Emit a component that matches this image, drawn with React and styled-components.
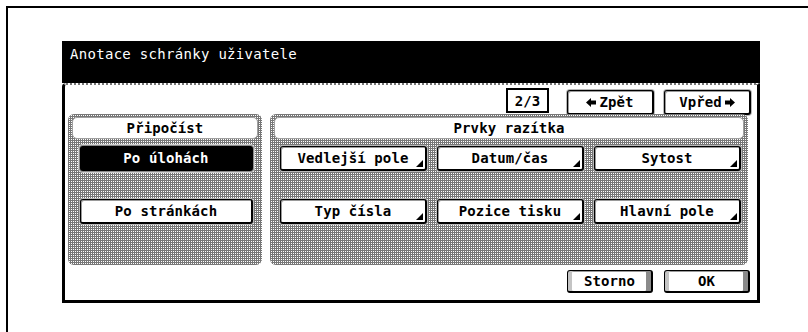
import React from 'react';
import styled, { createGlobalStyle, css } from 'styled-components';

const GlobalStyle = createGlobalStyle`
  html, body {
    margin: 0;
    padding: 0;
    background: #ffffff;
    overflow: hidden;
  }
  body {
    font-family: "DejaVu Sans Mono", "Liberation Mono", monospace;
  }
`;

const mesh = css`
  background-color: #ffffff;
  background-image:
    linear-gradient(90deg, #777777 1px, transparent 1px),
    linear-gradient(#777777 1px, transparent 1px);
  background-size: 2px 2px;
`;

function ArrowLeft() {
  return (
    <svg width="10" height="9" viewBox="0 0 10 9">
      <polygon points="0,4.5 5,0 5,2.5 10,2.5 10,6.5 5,6.5 5,9" fill="#000" />
    </svg>
  );
}

function ArrowRight() {
  return (
    <svg width="10" height="9" viewBox="0 0 10 9">
      <polygon points="10,4.5 5,0 5,2.5 0,2.5 0,6.5 5,6.5 5,9" fill="#000" />
    </svg>
  );
}

function App() {
  return (
    <>
      <GlobalStyle />
      <Frame>
        <Window>
          <TitleBar>Anotace schránky uživatele</TitleBar>
          <Body>
            <PagerRow>
              <PageBox>2/3</PageBox>
              <NavButton><ArrowLeft />Zpět</NavButton>
              <NavButton>Vpřed<ArrowRight /></NavButton>
            </PagerRow>
            <Groups>
              <Group $width="194px">
                <GroupHeader>Připočíst</GroupHeader>
                <LeftList>
                  <Button $selected>Po úlohách</Button>
                  <Button>Po stránkách</Button>
                </LeftList>
              </Group>
              <Group $width="478px">
                <GroupHeader>Prvky razítka</GroupHeader>
                <ButtonGrid>
                  <Button $menu>Vedlejší pole</Button>
                  <Button $menu>Datum/čas</Button>
                  <Button $menu>Sytost</Button>
                  <Button $menu>Typ čísla</Button>
                  <Button $menu>Pozice tisku</Button>
                  <Button $menu>Hlavní pole</Button>
                </ButtonGrid>
              </Group>
            </Groups>
            <FooterRow>
              <DialogButton>Storno</DialogButton>
              <DialogButton>OK</DialogButton>
            </FooterRow>
          </Body>
        </Window>
      </Frame>
    </>
  );
}

export default App;

const Frame = styled.div`
  margin: 6px 0 0 6px;
  height: calc(100vh - 6px);
  box-sizing: border-box;
  border-top: 2px solid #000;
  border-left: 2px solid #000;
  padding: 33px 0 0 54px;
`;

const Window = styled.div`
  width: 698px;
  height: 262px;
  display: flex;
  flex-direction: column;
`;

const TitleBar = styled.div`
  height: 42px;
  box-sizing: border-box;
  background: #000;
  color: #fff;
  font-size: 14px;
  letter-spacing: 0.3px;
  padding: 5px 0 0 8px;
  line-height: 16px;
`;

const Body = styled.div`
  flex: 1;
  display: flex;
  flex-direction: column;
  background: #fff;
  border-top: 2px dotted #777;
  border-left: 3px solid #000;
  border-right: 3px solid #000;
  border-bottom: 3px solid #000;
  border-top-left-radius: 4px;
  padding: 3px 6px 7px 3px;
`;

const PagerRow = styled.div`
  height: 26px;
  display: flex;
  justify-content: flex-end;
  align-items: flex-start;
  gap: 10px;
`;

const PageBox = styled.div`
  width: 43px;
  height: 25px;
  box-sizing: border-box;
  border: 2px solid #000;
  margin-right: 8px;
  display: flex;
  align-items: center;
  justify-content: center;
  font-size: 14px;
  font-weight: bold;
`;

const buttonFace = css`
  box-sizing: border-box;
  background: #fff;
  border: 1px solid #000;
  border-right-width: 2px;
  border-bottom-width: 2px;
  border-radius: 3px;
  box-shadow: inset 1px 1px 0 #9a9a9a, 0 0 0 1px #b8b8b8;
  font-family: inherit;
  font-size: 14px;
  font-weight: bold;
  letter-spacing: 0.1px;
  color: #000;
  display: flex;
  align-items: center;
  justify-content: center;
`;

const NavButton = styled.div`
  ${buttonFace}
  width: 87px;
  height: 25px;
  margin-top: 2px;
  gap: 3px;
`;

const Groups = styled.div`
  display: flex;
  gap: 8px;
  height: 151px;
`;

const Group = styled.div`
  ${mesh}
  width: ${(p) => p.$width};
  box-sizing: border-box;
  border-radius: 6px;
  padding: 3px 4px;
  display: flex;
  flex-direction: column;
`;

const GroupHeader = styled.div`
  height: 22px;
  box-sizing: border-box;
  background: #fff;
  border: 1px solid #a0a0a0;
  border-radius: 5px;
  display: flex;
  align-items: center;
  justify-content: center;
  font-size: 14px;
  font-weight: bold;
  letter-spacing: 0.1px;
`;

const LeftList = styled.div`
  display: flex;
  flex-direction: column;
  gap: 28px;
  margin: 7px 5px 0 8px;
`;

const ButtonGrid = styled.div`
  display: grid;
  grid-template-columns: repeat(3, 147px);
  grid-auto-rows: 24px;
  column-gap: 10px;
  row-gap: 29px;
  margin: 7px 0 0 6px;
`;

const Button = styled.div`
  ${buttonFace}
  position: relative;
  height: 25px;
  ${(p) =>
    p.$selected &&
    css`
      background: #000;
      color: #fff;
      border-color: #000;
      box-shadow: 0 0 0 1px #8c8c8c, 0 0 0 2px #d0d0d0;
    `}
  ${(p) =>
    p.$menu &&
    css`
      &::after {
        content: '';
        position: absolute;
        right: 2px;
        bottom: 2px;
        border-left: 7px solid transparent;
        border-bottom: 7px solid #000;
      }
    `}
`;

const FooterRow = styled.div`
  display: flex;
  justify-content: flex-end;
  gap: 11px;
  margin-top: 5px;
  padding-right: 1px;
`;

const DialogButton = styled.div`
  ${buttonFace}
  width: 86px;
  height: 23px;
  border-width: 1px 2px 2px 1px;
  box-shadow: inset 4px 0 0 #c4c4c4, inset -5px 0 0 #8a8a8a, inset 0 1px 0 #9a9a9a;
`;
